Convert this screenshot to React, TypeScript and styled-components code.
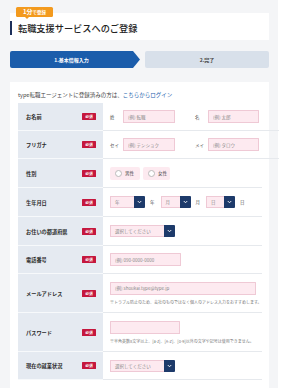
import React from "react";
import styled, { createGlobalStyle } from "styled-components";

const Global = createGlobalStyle`
  html, body { margin: 0; padding: 0; background: #ffffff; }
  body {
    font-family: "Noto Sans CJK JP", "Noto Sans", sans-serif;
    color: #333;
  }
  * { box-sizing: border-box; }
`;

const Page = styled.div`
  width: 278px;
  min-height: 388px;
  padding: 13px 9px 0 10px;
  background: #f4f5f7;
  display: flex;
  flex-direction: column;
`;

const TitleCard = styled.div`
  position: relative;
  background: #fff;
  height: 27px;
  padding-top: 8px;
`;

const Title = styled.h1`
  margin: 0;
  border-left: 2px solid #1c2f5a;
  padding-left: 6px;
  font-size: 9.2px;
  line-height: 14px;
  font-weight: 500;
  color: #222;
  white-space: nowrap;
`;

const Badge = styled.div`
  position: absolute;
  left: 6px;
  top: -6px;
  width: 37px;
  height: 10px;
  background: #f39a1e;
  color: #fff;
  border-radius: 1.5px;
  font-weight: 700;
  display: flex;
  align-items: baseline;
  justify-content: center;
  line-height: 10px;
  &::after {
    content: "";
    position: absolute;
    left: 9px;
    bottom: -2px;
    border-left: 2px solid transparent;
    border-right: 2px solid transparent;
    border-top: 2px solid #f39a1e;
  }
`;

const BadgeBig = styled.span`
  font-size: 6px;
`;

const BadgeSmall = styled.span`
  font-size: 4.5px;
`;

const Steps = styled.div`
  display: flex;
  gap: 5px;
  margin-top: 11px;
  height: 17px;
`;

const Step = styled.div<{ $active?: boolean }>`
  display: flex;
  align-items: center;
  justify-content: center;
  font-size: 5px;
  font-weight: 700;
  height: 17px;
  ${(p) =>
    p.$active
      ? `
    width: 130px;
    flex: none;
    background: #1b5dab;
    color: #fff;
    padding-right: 7px;
    border-radius: 2px 0 0 2px;
    clip-path: polygon(0 0, calc(100% - 7px) 0, 100% 50%, calc(100% - 7px) 100%, 0 100%);
  `
      : `
    flex: 1;
    background: #d8e0ea;
    color: #444;
    border-radius: 2px;
  `}
`;

const FormCard = styled.div`
  margin-top: 14px;
  background: #fff;
  padding: 9px 7px 8px 8px;
  flex: 1;
`;

const LoginLine = styled.p`
  margin: 0 0 4px;
  font-size: 5.5px;
  line-height: 8px;
  color: #444;
  white-space: nowrap;
`;

const LoginLink = styled.a`
  color: #1b5dab;
  text-decoration: none;
`;

const Table = styled.div`
  display: flex;
  flex-direction: column;
`;

const Row = styled.div<{ $h: number }>`
  display: grid;
  grid-template-columns: 85px 1fr;
  height: ${(p) => p.$h}px;
`;

const LabelCell = styled.div`
  background: #e5eaf1;
  border-bottom: 1px solid #f7f9fb;
  display: flex;
  align-items: center;
  justify-content: space-between;
  padding: 0 7px 0 8px;
`;

const LabelText = styled.span`
  font-size: 5.2px;
  font-weight: 700;
  color: #2b2b2b;
  white-space: nowrap;
`;

const Required = styled.span`
  width: 14px;
  height: 7px;
  background: #c5173d;
  color: #fff;
  font-size: 3.8px;
  font-weight: 700;
  display: flex;
  align-items: center;
  justify-content: center;
  border-radius: 0.5px;
`;

const ValueCell = styled.div<{ $stack?: boolean }>`
  border-bottom: 1px solid #e6e9ed;
  padding-left: 7px;
  display: flex;
  ${(p) =>
    p.$stack
      ? `flex-direction: column; justify-content: center; gap: 5px;`
      : `align-items: center;`}
`;

const NameGroup = styled.div`
  display: flex;
  align-items: center;
  margin-right: 20px;
`;

const SubLabel = styled.span`
  width: 13px;
  font-size: 4.5px;
  color: #555;
  white-space: nowrap;
`;

const TextInput = styled.input<{ $w: number }>`
  width: ${(p) => p.$w}px;
  height: 13px;
  margin: 0;
  padding: 0 0 0 4px;
  background: #fdeaf0;
  border: 1px solid #efc9d5;
  border-radius: 0.5px;
  font-family: inherit;
  font-size: 4.5px;
  color: #333;
  outline: none;
  &::placeholder {
    color: #8a8a8a;
  }
`;

const Note = styled.p`
  margin: 0;
  font-size: 4px;
  line-height: 5px;
  color: #777;
  white-space: nowrap;
`;

const RadioPill = styled.label<{ $w: number }>`
  width: ${(p) => p.$w}px;
  height: 13px;
  background: #fdeaf0;
  border-radius: 2px;
  display: flex;
  align-items: center;
  padding-left: 5px;
  gap: 3px;
  margin-right: 3px;
  font-size: 4.5px;
  color: #444;
`;

const RadioDot = styled.span`
  width: 7px;
  height: 7px;
  border-radius: 50%;
  background: #fff;
  border: 0.5px solid #bbb;
`;

const SelectBox = styled.div`
  display: flex;
  height: 12px;
`;

const SelectFace = styled.div<{ $w: number }>`
  width: ${(p) => p.$w}px;
  height: 12px;
  background: #fdeaf0;
  border: 0.5px solid #efc9d5;
  border-right: none;
  display: flex;
  align-items: center;
  padding-left: 4px;
  font-size: 4.5px;
  color: #8a8a8a;
  white-space: nowrap;
  overflow: hidden;
`;

const SelectButton = styled.div`
  width: 11px;
  height: 12px;
  background: #1d3a6a;
  border-radius: 0 1px 1px 0;
  display: flex;
  align-items: center;
  justify-content: center;
`;

const Unit = styled.span`
  font-size: 4.5px;
  color: #555;
  margin: 0 6px 0 5px;
`;

const Chevron = () => (
  <svg width="5" height="4" viewBox="0 0 10 8">
    <polyline points="1.5,2 5,5.5 8.5,2" fill="none" stroke="#fff" strokeWidth="1.8" />
  </svg>
);

const Select = ({ w, text }: { w: number; text: string }) => (
  <SelectBox>
    <SelectFace $w={w}>{text}</SelectFace>
    <SelectButton>
      <Chevron />
    </SelectButton>
  </SelectBox>
);

const Label = ({ text }: { text: string }) => (
  <LabelCell>
    <LabelText>{text}</LabelText>
    <Required>必須</Required>
  </LabelCell>
);

export default function App() {
  return (
    <>
      <Global />
      <Page>
        <TitleCard>
          <Badge>
            <BadgeBig>1分</BadgeBig>
            <BadgeSmall>で登録</BadgeSmall>
          </Badge>
          <Title>転職支援サービスへのご登録</Title>
        </TitleCard>

        <Steps>
          <Step $active>1.基本情報入力</Step>
          <Step>2.完了</Step>
        </Steps>

        <FormCard>
          <LoginLine>
            type転職エージェントに登録済みの方は、
            <LoginLink href="#">こちらからログイン</LoginLink>
          </LoginLine>
          <Table>
            <Row $h={28}>
              <Label text="お名前" />
              <ValueCell>
                <NameGroup>
                  <SubLabel>姓</SubLabel>
                  <TextInput $w={52} placeholder="(例) 転職" />
                </NameGroup>
                <NameGroup>
                  <SubLabel>名</SubLabel>
                  <TextInput $w={51} placeholder="(例) 太郎" />
                </NameGroup>
              </ValueCell>
            </Row>
            <Row $h={28}>
              <Label text="フリガナ" />
              <ValueCell>
                <NameGroup>
                  <SubLabel>セイ</SubLabel>
                  <TextInput $w={52} placeholder="(例) テンショク" />
                </NameGroup>
                <NameGroup>
                  <SubLabel>メイ</SubLabel>
                  <TextInput $w={51} placeholder="(例) タロウ" />
                </NameGroup>
              </ValueCell>
            </Row>
            <Row $h={29}>
              <Label text="性別" />
              <ValueCell>
                <RadioPill $w={30}>
                  <RadioDot />
                  男性
                </RadioPill>
                <RadioPill $w={27}>
                  <RadioDot />
                  女性
                </RadioPill>
              </ValueCell>
            </Row>
            <Row $h={29}>
              <Label text="生年月日" />
              <ValueCell>
                <Select w={24} text="年" />
                <Unit>年</Unit>
                <Select w={19} text="月" />
                <Unit>月</Unit>
                <Select w={18} text="日" />
                <Unit>日</Unit>
              </ValueCell>
            </Row>
            <Row $h={29}>
              <Label text="お住いの都道府県" />
              <ValueCell>
                <Select w={54} text="選択してください" />
              </ValueCell>
            </Row>
            <Row $h={28}>
              <Label text="電話番号" />
              <ValueCell>
                <TextInput $w={71} placeholder="(例) 090-0000-0000" />
              </ValueCell>
            </Row>
            <Row $h={39}>
              <Label text="メールアドレス" />
              <ValueCell $stack>
                <TextInput $w={146} placeholder="(例) shoukai.type@type.jp" />
                <Note>※トラブル防止のため、会社のものではなく個人のアドレス入力をおすすめします。</Note>
              </ValueCell>
            </Row>
            <Row $h={39}>
              <Label text="パスワード" />
              <ValueCell $stack>
                <TextInput $w={70} type="password" />
                <Note>※半角英数8文字以上、[a-z]、[A-Z]、[0-9]以外の文字や記号は使用できません。</Note>
              </ValueCell>
            </Row>
            <Row $h={28}>
              <Label text="現在の就業状況" />
              <ValueCell>
                <Select w={54} text="選択してください" />
              </ValueCell>
            </Row>
          </Table>
        </FormCard>
      </Page>
    </>
  );
}
